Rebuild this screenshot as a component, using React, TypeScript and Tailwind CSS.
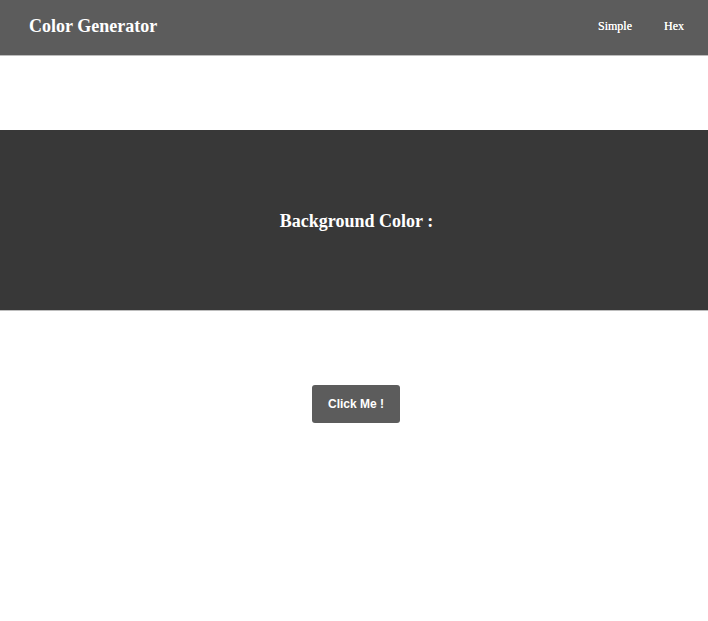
import React from "react";

export default function App() {
  const serif = { fontFamily: '"Liberation Serif", "Times New Roman", serif' };
  return (
    <div className="min-h-[621px] w-full bg-white" style={serif}>
      <nav className="flex h-[56px] items-center justify-between border-b border-[#bdbdbd] bg-[#5c5c5c] pb-[2px] pl-[29px] pr-[24px]">
        <span className="text-[18px] font-bold text-white">Color Generator</span>
        <div className="flex items-center gap-[32px] pb-[2px] text-[12px] font-medium text-white [text-shadow:0_0_0.4px_#fff]">
          <span className="-ml-[1px]">Simple</span>
          <span>Hex</span>
        </div>
      </nav>
      <div className="h-[74px]" />
      <section className="flex h-[181px] items-center justify-center border-b border-[#bdbdbd] bg-[#383838] pl-[5px] pt-[3px]">
        <h2 className="text-[18px] font-bold text-white">Background Color :</h2>
      </section>
      <div className="flex justify-center pl-[4px] pt-[74px]">
        <button
          className="h-[38px] w-[88px] rounded-[3px] bg-[#5c5c5c] text-[12px] font-bold text-white"
          style={{ fontFamily: '"Liberation Sans", Arial, sans-serif' }}
        >
          Click Me !
        </button>
      </div>
    </div>
  );
}
